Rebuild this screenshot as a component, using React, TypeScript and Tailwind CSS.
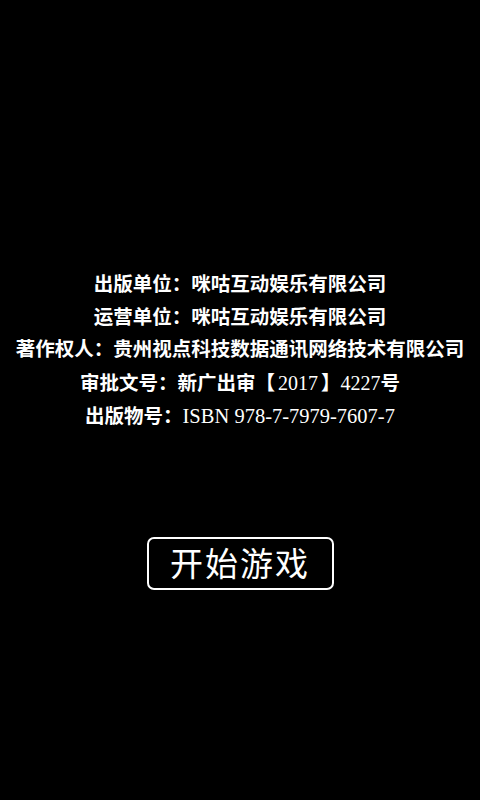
const lines = [
  '出版单位：咪咕互动娱乐有限公司',
  '运营单位：咪咕互动娱乐有限公司',
  '著作权人：贵州视点科技数据通讯网络技术有限公司',
]

export default function App() {
  return (
    <div className="w-[480px] h-[800px] bg-black flex flex-col items-center text-white font-['Liberation_Serif','Noto_Sans_CJK_SC',serif]">
      <div className="mt-[269px] flex flex-col items-center text-[19.5px] leading-[32.5px] font-bold">
        {lines.map((l) => (
          <p key={l} className="whitespace-nowrap">
            {l}
          </p>
        ))}
        <p className="whitespace-nowrap">
          审批文号：新广出审【<span className="px-[3px] text-[20px] font-normal">2017</span>】
          <span className="text-[20px] font-normal">4227</span>号
        </p>
        <p className="whitespace-nowrap">
          出版物号：<span className="text-[20.5px] font-normal">ISBN 978-7-7979-7607-7</span>
        </p>
      </div>
      <button className="mt-[103px] w-[187px] h-[53px] border-2 border-white rounded-[7px] flex items-center justify-center font-['Noto_Sans_CJK_SC',sans-serif] text-[33px] tracking-[2px] text-white">
        开始游戏
      </button>
    </div>
  )
}
